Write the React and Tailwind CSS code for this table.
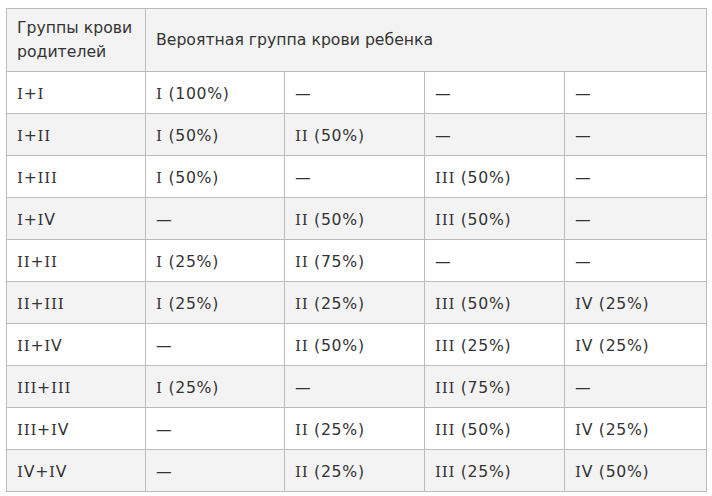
import React from "react";

const rows = [
  ["I+I", "I (100%)", "—", "—", "—"],
  ["I+II", "I (50%)", "II (50%)", "—", "—"],
  ["I+III", "I (50%)", "—", "III (50%)", "—"],
  ["I+IV", "—", "II (50%)", "III (50%)", "—"],
  ["II+II", "I (25%)", "II (75%)", "—", "—"],
  ["II+III", "I (25%)", "II (25%)", "III (50%)", "IV (25%)"],
  ["II+IV", "—", "II (50%)", "III (25%)", "IV (25%)"],
  ["III+III", "I (25%)", "—", "III (75%)", "—"],
  ["III+IV", "—", "II (25%)", "III (50%)", "IV (25%)"],
  ["IV+IV", "—", "II (25%)", "III (25%)", "IV (50%)"],
];

function Txt({ s }) {
  const parts = s.split(/(I)/);
  return (
    <>
      {parts.map((p, i) =>
        p === "I" ? (
          <span key={i} className="font-['DejaVu_Serif',serif] text-[15.2px]">
            I
          </span>
        ) : (
          <span key={i}>{p}</span>
        )
      )}
    </>
  );
}

export default function App() {
  return (
    <div className="bg-white w-[712px] h-[496px] pt-[8px] pl-[6px] font-['DejaVu_Sans',Verdana,sans-serif] text-[15.7px] text-[#333]">
      <table className="table-fixed border-collapse w-[700px]">
        <colgroup>
          <col className="w-[139px]" />
          <col className="w-[139px]" />
          <col className="w-[140px]" />
          <col className="w-[140px]" />
          <col className="w-[142px]" />
        </colgroup>
        <tbody>
          <tr className="bg-[#f3f3f3] h-[63px]">
            <td className="border border-[#bbb] pl-[10px] pr-2 align-middle leading-[24px] font-normal">
              Группы крови родителей
            </td>
            <td colSpan={4} className="border border-[#bbb] pl-[10px] align-middle leading-[24px]">
              Вероятная группа крови ребенка
            </td>
          </tr>
          {rows.map((r, i) => (
            <tr key={i} className={`h-[42px] ${i % 2 === 1 ? "bg-[#f3f3f3]" : "bg-white"}`}>
              {r.map((c, j) => (
                <td key={j} className="border border-[#bbb] pl-[10px] pt-[2px] align-middle leading-[20px] p-0 tracking-[0.7px]">
                  <Txt s={c} />
                </td>
              ))}
            </tr>
          ))}
        </tbody>
      </table>
    </div>
  );
}
